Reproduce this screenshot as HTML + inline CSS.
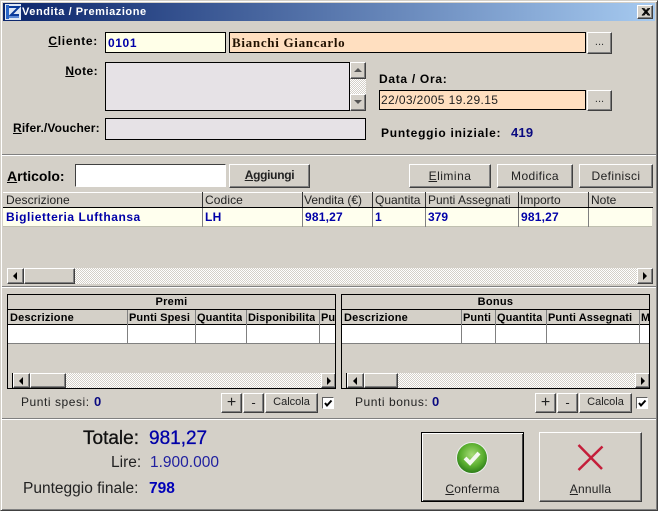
<!DOCTYPE html>
<html><head><meta charset="utf-8">
<style>
html,body{margin:0;padding:0;width:658px;height:511px;overflow:hidden;background:#d4d0c8}
*{box-sizing:border-box}
body{font-family:"Liberation Sans",sans-serif;font-size:12px;color:#000;position:relative}
.a{position:absolute;white-space:nowrap;line-height:14px}
.b{font-weight:bold}
.blue{color:#0000a8}
.u{text-decoration:underline}
.btn{position:absolute;background:#d4d0c8;border:1px solid;border-color:#fff #404040 #404040 #fff;box-shadow:inset -1px -1px 0 #808080;text-align:center;white-space:nowrap}
.inp{position:absolute;border:1px solid #000;white-space:nowrap;overflow:hidden}
.groove{position:absolute;height:2px;background:linear-gradient(#808080 50%,#fff 50%)}
.hatch{position:absolute;background:repeating-conic-gradient(#d4d0c8 0 25%,#fff 0 50%) 0 0/2px 2px}
.col{position:absolute;top:0;bottom:0;width:1px;background:#808080}
.cell{position:absolute;white-space:nowrap;overflow:hidden;line-height:14px}
.grid{position:absolute;border:1px solid #000;background:#d4d0c8;overflow:hidden}
.tri{position:absolute;width:0;height:0;border-style:solid;border-color:transparent}
</style></head><body>

<!-- window frame -->
<div style="position:absolute;left:0;top:0;width:658px;height:511px;border:1px solid;border-color:#d4d0c8 #404040 #404040 #d4d0c8;box-shadow:inset 1px 1px 0 #fff,inset -1px -1px 0 #808080"></div>

<!-- title bar -->
<div style="position:absolute;left:3px;top:3px;width:652px;height:18px;background:linear-gradient(90deg,#0a246a,#a6caf0)"></div>
<svg style="position:absolute;left:5px;top:4px" width="16" height="16" viewBox="0 0 16 16"><rect width="16" height="16" fill="#dfe8f5"/><rect x="1" y="1" width="3" height="14" fill="#2a66c8"/><path d="M4 3H14L6 11H14" fill="none" stroke="#0a3a9a" stroke-width="2"/><path d="M4 13H14" stroke="#2a66c8" stroke-width="1.5"/></svg>
<div class="a b" style="left:22px;top:5px;color:#fff;font-size:11px;letter-spacing:.55px">Vendita / Premiazione</div>
<div class="btn" style="left:637px;top:5px;width:16px;height:14px"></div>
<svg style="position:absolute;left:641px;top:8px" width="9" height="8" viewBox="0 0 9 8"><path d="M1 0L7.5 7.5M2.5 0L9 7.5M7.5 0L1 7.5M9 0L2.500 7.500" stroke="#000" stroke-width="1" fill="none"/></svg>

<!-- top form -->
<div class="a b" style="right:560px;top:34px;letter-spacing:.7px"><span class="u">C</span>liente:</div>
<div class="inp blue" style="left:105px;top:32px;width:121px;height:21px;background:#ffffe8;padding:3px 2px;line-height:14px;font-size:12px;font-weight:bold;letter-spacing:.6px">0101</div>
<div class="inp" style="left:229px;top:32px;width:357px;height:21px;background:#ffdfc0;padding:2px 2px;font-family:'Liberation Serif',serif;font-weight:bold;font-size:13px;line-height:16px;color:#201000;letter-spacing:.7px">Bianchi Giancarlo</div>
<div class="btn" style="left:587px;top:32px;width:25px;height:22px;font-size:11px;line-height:18px;color:#333">...</div>

<div class="a b" style="right:560px;top:64px;letter-spacing:.4px"><span class="u">N</span>ote:</div>
<div class="inp" style="left:105px;top:62px;width:245px;height:49px;background:#e6e2e6"></div>
<div class="hatch" style="left:350px;top:62px;width:16px;height:49px"></div>
<div class="btn" style="left:350px;top:62px;width:16px;height:17px"></div>
<div class="tri" style="left:354px;top:68px;border-width:0 4px 4px;border-bottom-color:#555"></div>
<div class="btn" style="left:350px;top:94px;width:16px;height:17px"></div>
<div class="tri" style="left:354px;top:100px;border-width:4px 4px 0;border-top-color:#555"></div>

<div class="a b" style="left:13px;top:121px;letter-spacing:.15px"><span class="u">R</span>ifer./Voucher:</div>
<div class="inp" style="left:105px;top:118px;width:261px;height:22px;background:#e6e2e6"></div>

<div class="a b" style="left:379px;top:72px;letter-spacing:.7px">Data / Ora:</div>
<div class="inp" style="left:379px;top:90px;width:207px;height:20px;background:#ffdfc0;padding:2px 1px;line-height:15px;font-size:12px;color:#222;letter-spacing:.38px">22/03/2005 19.29.15</div>
<div class="btn" style="left:587px;top:90px;width:25px;height:21px;font-size:11px;line-height:17px;color:#333">...</div>
<div class="a b" style="left:381px;top:126px;letter-spacing:.75px">Punteggio iniziale:</div>
<div class="a b" style="left:511px;top:126px;color:#0a0a80;font-size:13px;letter-spacing:.2px">419</div>

<div class="groove" style="left:2px;top:154px;width:654px"></div>

<!-- articolo -->
<div class="a b" style="left:7px;top:169px;font-size:14px;letter-spacing:0"><span class="u">A</span>rticolo:</div>
<div style="position:absolute;left:75px;top:164px;width:151px;height:23px;background:#fff;border:1px solid;border-color:#404040 #fff #fff #404040"></div>
<div class="btn b" style="left:229px;top:164px;width:81px;height:24px;font-size:12px;line-height:20px;color:#222;letter-spacing:-.3px"><span class="u">A</span>ggiungi</div>
<div class="btn" style="left:409px;top:164px;width:82px;height:24px;line-height:22px;letter-spacing:.5px;color:#222"><span class="u">E</span>limina</div>
<div class="btn" style="left:497px;top:164px;width:76px;height:24px;line-height:22px;letter-spacing:.4px;color:#222">Modifica</div>
<div class="btn" style="left:579px;top:164px;width:74px;height:24px;line-height:22px;letter-spacing:.4px;color:#222">Definisci</div>

<!-- main grid -->
<div style="position:absolute;left:3px;top:192px;width:650px;height:15px;background:#d4d0c8;border-top:1px solid #fff"></div>
<div style="position:absolute;left:3px;top:207px;width:650px;height:1px;background:#000"></div>
<div style="position:absolute;left:3px;top:208px;width:649px;height:19px;background:#ffffee;border-bottom:1px solid #c0c0b0"></div>
<div class="col" style="left:202px;top:192px;bottom:auto;height:15px;background:#333"></div>
<div class="col" style="left:302px;top:192px;bottom:auto;height:15px;background:#333"></div>
<div class="col" style="left:372px;top:192px;bottom:auto;height:15px;background:#333"></div>
<div class="col" style="left:425px;top:192px;bottom:auto;height:15px;background:#333"></div>
<div class="col" style="left:518px;top:192px;bottom:auto;height:15px;background:#333"></div>
<div class="col" style="left:588px;top:192px;bottom:auto;height:15px;background:#333"></div>
<div class="col" style="left:202px;top:208px;bottom:auto;height:19px"></div>
<div class="col" style="left:302px;top:208px;bottom:auto;height:19px"></div>
<div class="col" style="left:372px;top:208px;bottom:auto;height:19px"></div>
<div class="col" style="left:425px;top:208px;bottom:auto;height:19px"></div>
<div class="col" style="left:518px;top:208px;bottom:auto;height:19px"></div>
<div class="col" style="left:588px;top:208px;bottom:auto;height:19px"></div>

<div class="a" style="left:6px;top:193px;color:#222;letter-spacing:.1px">Descrizione</div>
<div class="a" style="left:205px;top:193px;color:#222;letter-spacing:.1px">Codice</div>
<div class="a" style="left:304px;top:193px;color:#222">Vendita (€)</div>
<div class="a" style="left:375px;top:193px;color:#222">Quantita</div>
<div class="a" style="left:428px;top:193px;color:#222">Punti Assegnati</div>
<div class="a" style="left:520px;top:193px;color:#222">Importo</div>
<div class="a" style="left:591px;top:193px;color:#222">Note</div>

<div class="a b blue" style="left:6px;top:210px;letter-spacing:.55px">Biglietteria Lufthansa</div>
<div class="a b blue" style="left:205px;top:210px;letter-spacing:.3px">LH</div>
<div class="a b blue" style="left:305px;top:210px;letter-spacing:.2px">981,27</div>
<div class="a b blue" style="left:375px;top:210px">1</div>
<div class="a b blue" style="left:428px;top:210px">379</div>
<div class="a b blue" style="left:521px;top:210px;letter-spacing:.2px">981,27</div>

<!-- main scrollbar -->
<div class="hatch" style="left:7px;top:268px;width:646px;height:16px"></div>
<div class="btn" style="left:7px;top:268px;width:17px;height:16px"></div>
<div class="tri" style="left:13px;top:272px;border-width:4px 4px 4px 0;border-right-color:#000"></div>
<div class="btn" style="left:24px;top:268px;width:51px;height:16px"></div>
<div class="btn" style="left:637px;top:268px;width:16px;height:16px"></div>
<div class="tri" style="left:643px;top:272px;border-width:4px 0 4px 4px;border-left-color:#000"></div>
<div class="groove" style="left:2px;top:286px;width:654px"></div>

<!-- Premi -->
<div class="grid" style="left:7px;top:294px;width:329px;height:95px">
  <div style="position:absolute;left:0;top:0;width:100%;height:15px;border-bottom:1px solid #000;text-align:center;font-weight:bold;font-size:11px;line-height:15px;letter-spacing:.3px">Premi</div>
  <div style="position:absolute;left:0;top:15px;width:100%;height:15px;border-bottom:1px solid #000"></div>
  <div style="position:absolute;left:0;top:30px;width:100%;height:19px;background:#fff;border-bottom:1px solid #808080"></div>
  <div class="col" style="left:119px;top:15px;bottom:auto;height:34px;background:#808080"></div>
  <div class="col" style="left:187px;top:15px;bottom:auto;height:34px;background:#808080"></div>
  <div class="col" style="left:238px;top:15px;bottom:auto;height:34px;background:#808080"></div>
  <div class="col" style="left:311px;top:15px;bottom:auto;height:34px;background:#808080"></div>
  <div class="cell b" style="left:2px;top:16px;font-size:11px;letter-spacing:.2px">Descrizione</div>
  <div class="cell b" style="left:121px;top:16px;font-size:11px;letter-spacing:.1px">Punti Spesi</div>
  <div class="cell b" style="left:189px;top:16px;font-size:11px;letter-spacing:.1px">Quantita</div>
  <div class="cell b" style="left:240px;top:16px;font-size:11px;letter-spacing:.1px">Disponibilita</div>
  <div class="cell b" style="left:313px;top:16px;font-size:11px;width:15px">Pu</div>
  <div class="hatch" style="left:4px;top:78px;width:324px;height:15px"></div>
  <div class="col" style="left:4px;top:78px;bottom:auto;height:15px;background:#000"></div>
  <div class="btn" style="left:5px;top:78px;width:17px;height:15px"></div>
  <div class="tri" style="left:11px;top:82px;border-width:4px 4px 4px 0;border-right-color:#000"></div>
  <div class="btn" style="left:22px;top:78px;width:36px;height:15px"></div>
  <div class="btn" style="left:313px;top:78px;width:15px;height:15px"></div>
  <div class="tri" style="left:319px;top:82px;border-width:4px 0 4px 4px;border-left-color:#000"></div>
</div>

<!-- Bonus -->
<div class="grid" style="left:341px;top:294px;width:309px;height:95px">
  <div style="position:absolute;left:0;top:0;width:100%;height:15px;border-bottom:1px solid #000;text-align:center;font-weight:bold;font-size:11px;line-height:15px;letter-spacing:.3px">Bonus</div>
  <div style="position:absolute;left:0;top:15px;width:100%;height:15px;border-bottom:1px solid #000"></div>
  <div style="position:absolute;left:0;top:30px;width:100%;height:19px;background:#fff;border-bottom:1px solid #808080"></div>
  <div class="col" style="left:119px;top:15px;bottom:auto;height:34px;background:#808080"></div>
  <div class="col" style="left:153px;top:15px;bottom:auto;height:34px;background:#808080"></div>
  <div class="col" style="left:204px;top:15px;bottom:auto;height:34px;background:#808080"></div>
  <div class="col" style="left:297px;top:15px;bottom:auto;height:34px;background:#808080"></div>
  <div class="cell b" style="left:2px;top:16px;font-size:11px;letter-spacing:.2px">Descrizione</div>
  <div class="cell b" style="left:121px;top:16px;font-size:11px;letter-spacing:.1px">Punti</div>
  <div class="cell b" style="left:155px;top:16px;font-size:11px;letter-spacing:.1px">Quantita</div>
  <div class="cell b" style="left:206px;top:16px;font-size:11px;letter-spacing:.1px">Punti Assegnati</div>
  <div class="cell b" style="left:299px;top:16px;font-size:11px;width:9px">M</div>
  <div class="hatch" style="left:4px;top:78px;width:304px;height:15px"></div>
  <div class="col" style="left:4px;top:78px;bottom:auto;height:15px;background:#000"></div>
  <div class="btn" style="left:5px;top:78px;width:17px;height:15px"></div>
  <div class="tri" style="left:11px;top:82px;border-width:4px 4px 4px 0;border-right-color:#000"></div>
  <div class="btn" style="left:22px;top:78px;width:34px;height:15px"></div>
  <div class="btn" style="left:293px;top:78px;width:15px;height:15px"></div>
  <div class="tri" style="left:299px;top:82px;border-width:4px 0 4px 4px;border-left-color:#000"></div>
</div>

<!-- sub-row left -->
<div class="a" style="left:21px;top:395px;color:#222;letter-spacing:.55px">Punti spesi:</div>
<div class="a b" style="left:94px;top:395px;color:#0a0a80;font-size:13px">0</div>
<div class="btn" style="left:221px;top:393px;width:21px;height:20px;font-size:16px;line-height:17px;color:#222">+</div>
<div class="btn" style="left:243px;top:393px;width:21px;height:20px;font-size:13px;line-height:17px;color:#222">-</div>
<div class="btn" style="left:265px;top:393px;width:53px;height:20px;font-size:11px;line-height:17px;color:#222">Calcola</div>
<div style="position:absolute;left:322px;top:397px;width:12px;height:12px;background:#fff;border:1px solid;border-color:#606060 #fff #fff #606060"></div>
<svg style="position:absolute;left:322px;top:397px" width="12" height="12" viewBox="0 0 12 12"><path d="M3 6L5 8.500L9.500 3.500" fill="none" stroke="#000" stroke-width="2"/></svg>

<!-- sub-row right -->
<div class="a" style="left:355px;top:395px;color:#222;letter-spacing:.55px">Punti bonus:</div>
<div class="a b" style="left:432px;top:395px;color:#0a0a80;font-size:13px">0</div>
<div class="btn" style="left:535px;top:393px;width:21px;height:20px;font-size:16px;line-height:17px;color:#222">+</div>
<div class="btn" style="left:557px;top:393px;width:21px;height:20px;font-size:13px;line-height:17px;color:#222">-</div>
<div class="btn" style="left:579px;top:393px;width:53px;height:20px;font-size:11px;line-height:17px;color:#222">Calcola</div>
<div style="position:absolute;left:636px;top:397px;width:12px;height:12px;background:#fff;border:1px solid;border-color:#606060 #fff #fff #606060"></div>
<svg style="position:absolute;left:636px;top:397px" width="12" height="12" viewBox="0 0 12 12"><path d="M3 6L5 8.500L9.500 3.500" fill="none" stroke="#000" stroke-width="2"/></svg>

<div class="groove" style="left:2px;top:418px;width:654px"></div>

<!-- totals -->
<div class="a" style="left:83px;top:429px;font-size:19px;line-height:20px;color:#111;-webkit-text-stroke:.3px #111">Totale:</div>
<div class="a" style="left:149px;top:429px;font-size:19px;line-height:20px;color:#0000a8;-webkit-text-stroke:.3px #0000a8">981,27</div>
<div class="a" style="left:111px;top:455px;font-size:15.500px;line-height:16px;color:#222">Lire:</div>
<div class="a" style="left:150px;top:455px;font-size:15.500px;line-height:16px;color:#2020a0">1.900.000</div>
<div class="a" style="left:23px;top:481px;font-size:15.500px;line-height:16px;color:#222">Punteggio finale:</div>
<div class="a b" style="left:149px;top:481px;font-size:15.500px;line-height:16px;color:#0000b8">798</div>

<!-- action buttons -->
<div style="position:absolute;left:421px;top:432px;width:103px;height:70px;border:1px solid #000;background:#d4d0c8;box-shadow:inset 1px 1px 0 #fff,inset -1px -1px 0 #404040"></div>
<svg style="position:absolute;left:455px;top:441px" width="34" height="34" viewBox="0 0 34 34">
<defs><radialGradient id="g" cx="50%" cy="40%" r="60%"><stop offset="0" stop-color="#a8dc78"/><stop offset=".6" stop-color="#5cb030"/><stop offset="1" stop-color="#2a7a18"/></radialGradient></defs>
<circle cx="17" cy="17" r="15.500" fill="url(#g)" stroke="#eee" stroke-width="1"/>
<path d="M10 17L15 22L24 12" fill="none" stroke="#f4f8f0" stroke-width="4"/>
</svg>
<div class="a" style="left:421px;top:482px;width:103px;text-align:center;color:#222;letter-spacing:.2px"><span class="u">C</span>onferma</div>

<div style="position:absolute;left:539px;top:432px;width:103px;height:70px;background:#d4d0c8;border:1px solid;border-color:#fff #404040 #404040 #fff;box-shadow:inset -1px -1px 0 #808080"></div>
<svg style="position:absolute;left:575px;top:443px" width="30" height="30" viewBox="0 0 30 30"><path d="M3.500 2L27 26M27.500 3.500L3.500 27" fill="none" stroke="#c41e3a" stroke-width="2.500"/></svg>
<div class="a" style="left:539px;top:482px;width:103px;text-align:center;color:#222;letter-spacing:.2px"><span class="u">A</span>nnulla</div>

</body></html>
